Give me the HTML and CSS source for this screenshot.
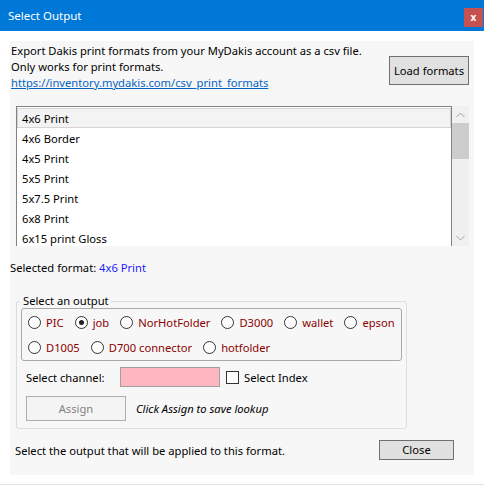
FILE: index.html
```html
<!DOCTYPE html>
<html>
<head>
<meta charset="utf-8">
<link rel="stylesheet" href="styles.css">
</head>
<body>
<div class="window">
  <div class="titlebar">
    <span class="title">Select Output</span>
    <span class="close-x">x</span>
  </div>
  <div class="panel">
    <div class="header">
      <div class="intro">
        <div>Export Dakis print formats from your MyDakis account as a csv file.</div>
        <div>Only works for print formats.</div>
        <div><span class="link">https://inventory.mydakis.com/csv_print_formats</span></div>
      </div>
      <div class="btn load">Load formats</div>
    </div>
    <div class="listwrap">
      <div class="list">
        <div class="item selected">4x6 Print</div>
        <div class="item">4x6 Border</div>
        <div class="item">4x5 Print</div>
        <div class="item">5x5 Print</div>
        <div class="item">5x7.5 Print</div>
        <div class="item">6x8 Print</div>
        <div class="item">6x15 print Gloss</div>
      </div>
      <div class="scrollbar">
        <div class="arrow">
          <svg width="9" height="6" viewBox="0 0 9 6"><path d="M0.5 5 L4.5 1 L8.5 5" fill="none" stroke="#a3a3a3" stroke-width="1"/></svg>
        </div>
        <div class="thumb"></div>
        <div class="track"></div>
        <div class="arrow">
          <svg width="9" height="6" viewBox="0 0 9 6"><path d="M0.5 1 L4.5 5 L8.5 1" fill="none" stroke="#a3a3a3" stroke-width="1"/></svg>
        </div>
      </div>
    </div>
    <div class="selected-format">Selected format: <span class="fmt">4x6 Print</span></div>
    <fieldset class="group">
      <legend>Select an output</legend>
      <div class="radios">
        <div class="rrow">
          <span class="radio"><span class="circle"></span>PIC</span>
          <span class="radio"><span class="circle on"></span>job</span>
          <span class="radio"><span class="circle"></span>NorHotFolder</span>
          <span class="radio"><span class="circle"></span>D3000</span>
          <span class="radio"><span class="circle"></span>wallet</span>
          <span class="radio"><span class="circle"></span>epson</span>
        </div>
        <div class="rrow">
          <span class="radio"><span class="circle"></span>D1005</span>
          <span class="radio"><span class="circle"></span>D700 connector</span>
          <span class="radio"><span class="circle"></span>hotfolder</span>
        </div>
      </div>
      <div class="channel">
        <span class="chlabel">Select channel:</span>
        <span class="input"></span>
        <span class="check"></span>
        <span class="chktext">Select Index</span>
      </div>
      <div class="assign-row">
        <div class="btn assign">Assign</div>
        <span class="hint">Click Assign to save lookup</span>
      </div>
    </fieldset>
    <div class="footer">
      <span class="ftext">Select the output that will be applied to this format.</span>
      <div class="btn closebtn">Close</div>
    </div>
  </div>
</div>
</body>
</html>
```
FILE: styles.css
```css
* { box-sizing: border-box; }
html, body { margin: 0; padding: 0; background: #ffffff; }
body {
  font-family: "Noto Sans", "Open Sans", sans-serif;
  font-size: 11.2px;
  color: #000;
  width: 484px;
  height: 485px;
  overflow: hidden;
}
.window {
  width: 484px;
  height: 485px;
  border-bottom: 1px solid #e2e2e2;
}
.titlebar {
  height: 31px;
  background: #0078d7;
  display: flex;
  justify-content: space-between;
  align-items: flex-start;
  padding-left: 8px;
}
.title {
  color: #fff;
  font-size: 11.5px;
  line-height: 16px;
  margin-top: 8px;
}
.close-x {
  width: 19px;
  height: 19px;
  margin-top: 8px;
  margin-right: 1px;
  background: #c75050;
  color: #fff;
  font-weight: bold;
  font-size: 10px;
  line-height: 18px;
  text-align: center;
}
.panel {
  margin: 10px 10px 0 10px;
  height: 434px;
  background: #f7f7f7;
  display: flex;
  flex-direction: column;
}
.header {
  display: flex;
  justify-content: space-between;
  align-items: flex-start;
}
.intro {
  padding-top: 2px;
  padding-left: 1px;
  line-height: 16px;
}
.link { color: #0563c1; text-decoration: underline; }
.btn {
  border: 1px solid #adadad;
  background: #e1e1e1;
  text-align: center;
}
.load {
  width: 80px;
  height: 29px;
  line-height: 27px;
  margin-top: 15px;
  margin-right: 5px;
  border-color: #707070;
}
.listwrap {
  display: flex;
  margin: 15px 5px 0 6px;
  height: 140px;
}
.list {
  flex: 1;
  border: 1px solid #828282;
  border-bottom: none;
  background: #fff;
  padding: 1px 0 0 0;
  overflow: hidden;
}
.item {
  height: 20px;
  line-height: 21px;
  padding-left: 5px;
}
.item.selected {
  background: #f3f3f3;
  border: 1px solid #d4d4d4;
  line-height: 19px;
  padding-left: 4px;
}
.scrollbar {
  width: 17px;
  background: #f0f0f0;
  display: flex;
  flex-direction: column;
}
.arrow {
  height: 17px;
  display: flex;
  align-items: center;
  justify-content: center;
}
.thumb {
  height: 36px;
  background: #cdcdcd;
}
.track { flex: 1; }
.selected-format {
  margin-top: 14px;
  line-height: 16px;
}
.fmt { color: #1a1aff; }
.group {
  margin: 17px 0 0 6px;
  width: 391px;
  border: 1px solid #d5dfe5;
  border-radius: 3px;
  padding: 0 4px 7px 4px;
  min-width: 0;
}
.group legend {
  padding: 0 2px 0 3px;
  margin-left: -1px;
  line-height: 16px;
}
.radios {
  margin-top: -1px;
  border: 1px solid #a9a9a9;
  border-radius: 3px;
  padding: 1px 0 0 6px;
}
.rrow {
  display: flex;
  height: 25px;
  align-items: center;
  gap: 11px;
}
.radio {
  display: inline-flex;
  align-items: center;
  color: #8b0000;
}
.circle {
  width: 13px;
  height: 13px;
  border: 1px solid #333;
  border-radius: 50%;
  background: #fff;
  margin-right: 5px;
  display: inline-flex;
  align-items: center;
  justify-content: center;
}
.circle.on::after {
  content: "";
  width: 5px;
  height: 5px;
  border-radius: 50%;
  background: #222;
}
.channel {
  display: flex;
  align-items: center;
  margin-top: 6px;
  height: 20px;
  padding-left: 5px;
}
.chlabel { width: 94px; }
.input {
  width: 100px;
  height: 20px;
  background: #ffb6c1;
  border: 1px solid #a0a0a0;
}
.check {
  width: 13px;
  height: 13px;
  border: 1px solid #333;
  background: #fff;
  margin-left: 6px;
  margin-right: 5px;
}
.assign-row {
  display: flex;
  align-items: center;
  margin-top: 9px;
  padding-left: 5px;
}
.assign {
  width: 100px;
  height: 25px;
  line-height: 23px;
  background: #f4f4f4;
  border-color: #adadad;
  color: #838383;
}
.hint {
  font-style: italic;
  margin-left: 10px;
}
.footer {
  display: flex;
  justify-content: space-between;
  align-items: center;
  margin-top: 11px;
  padding-left: 5px;
  padding-right: 20px;
}
.closebtn {
  width: 75px;
  height: 20px;
  line-height: 18px;
  border-color: #707070;
}
```
